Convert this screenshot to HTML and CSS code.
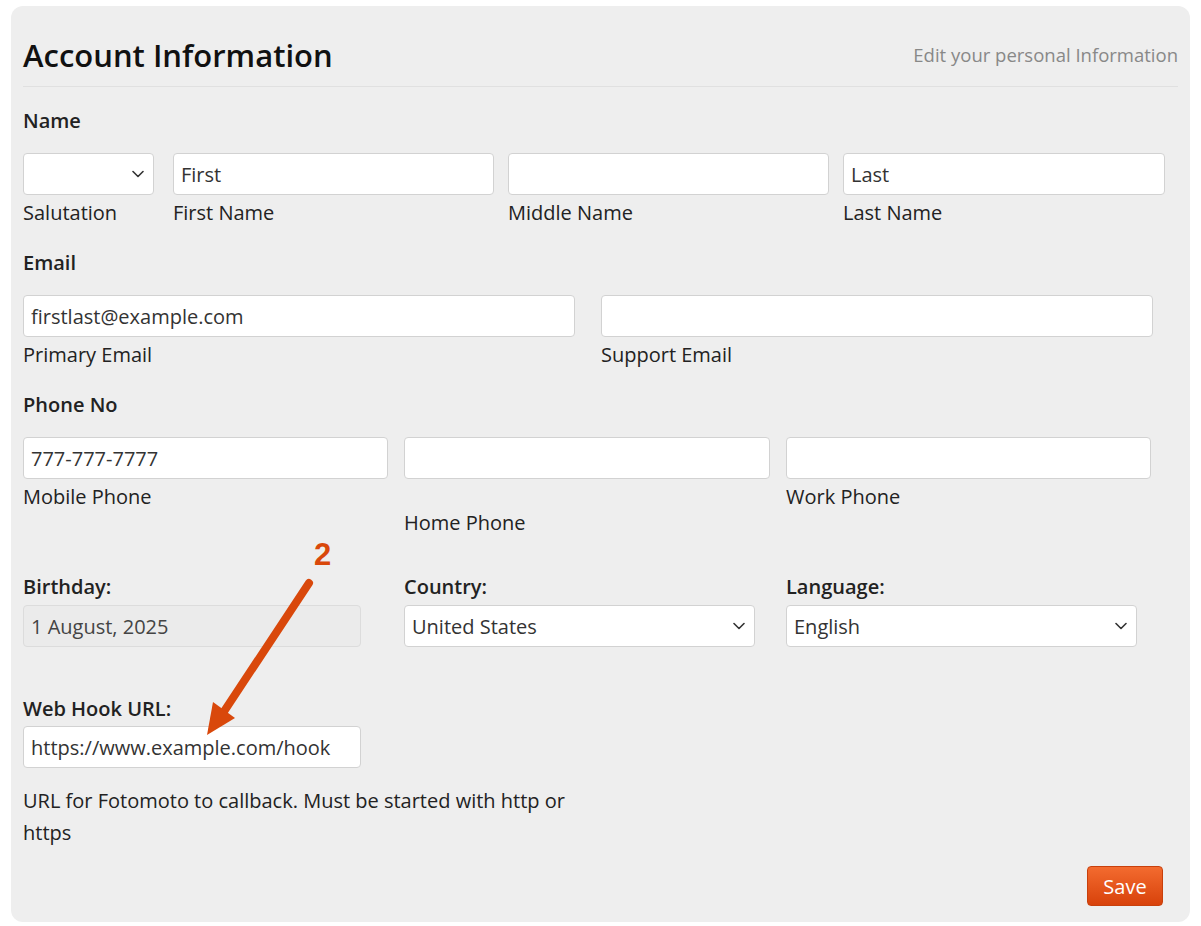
FILE: index.html
```html
<!DOCTYPE html>
<html lang="en">
<head>
<meta charset="UTF-8">
<meta name="viewport" content="width=device-width, initial-scale=1.0">
<title>Account Information</title>
<link rel="stylesheet" href="styles.css">
</head>
<body>

<div class="panel">
    <div class="panel-header">
        <h1>Account Information</h1>
        <span class="subtitle">Edit your personal Information</span>
    </div>

    <form id="accountForm">
        <div class="section">
            <div class="section-label">Name</div>
            <div class="row name-row">
                <div class="field salutation">
                    <div class="select-wrap">
                        <select id="salutation"><option value=""></option><option>Mr.</option><option>Ms.</option></select>
                        <svg class="chevron" viewBox="0 0 12 8" width="12" height="8"><path d="M1 1.5 6 6.5 11 1.5" fill="none" stroke="#333" stroke-width="1.6" stroke-linecap="round" stroke-linejoin="round"/></svg>
                    </div>
                    <div class="caption">Salutation</div>
                </div>
                <div class="field">
                    <input type="text" value="First">
                    <div class="caption">First Name</div>
                </div>
                <div class="field">
                    <input type="text" value="">
                    <div class="caption">Middle Name</div>
                </div>
                <div class="field">
                    <input type="text" value="Last">
                    <div class="caption">Last Name</div>
                </div>
            </div>
        </div>

        <div class="section">
            <div class="section-label">Email</div>
            <div class="row email-row">
                <div class="field">
                    <input type="text" value="firstlast@example.com">
                    <div class="caption">Primary Email</div>
                </div>
                <div class="field">
                    <input type="text" value="">
                    <div class="caption">Support Email</div>
                </div>
            </div>
        </div>

        <div class="section">
            <div class="section-label">Phone No</div>
            <div class="row phone-row">
                <div class="field">
                    <input type="text" value="777-777-7777">
                    <div class="caption">Mobile Phone</div>
                </div>
                <div class="field">
                    <input type="text" value="">
                    <div class="caption caption-low">Home Phone</div>
                </div>
                <div class="field">
                    <input type="text" value="">
                    <div class="caption">Work Phone</div>
                </div>
            </div>
        </div>

        <div class="row phone-row extra-row">
            <div class="field">
                <label class="field-label">Birthday:</label>
                <input type="text" class="short" value="1 August, 2025" disabled>
            </div>
            <div class="field">
                <label class="field-label">Country:</label>
                <div class="select-wrap wide">
                    <select><option>United States</option><option>Canada</option></select>
                    <svg class="chevron" viewBox="0 0 12 8" width="12" height="8"><path d="M1 1.5 6 6.5 11 1.5" fill="none" stroke="#333" stroke-width="1.6" stroke-linecap="round" stroke-linejoin="round"/></svg>
                </div>
            </div>
            <div class="field">
                <label class="field-label">Language:</label>
                <div class="select-wrap wide">
                    <select><option>English</option><option>French</option></select>
                    <svg class="chevron" viewBox="0 0 12 8" width="12" height="8"><path d="M1 1.5 6 6.5 11 1.5" fill="none" stroke="#333" stroke-width="1.6" stroke-linecap="round" stroke-linejoin="round"/></svg>
                </div>
            </div>
        </div>

        <div class="hook">
            <label class="field-label">Web Hook URL:</label>
            <input type="text" class="short" value="https://www.example.com/hook">
            <p class="help">URL for Fotomoto to callback. Must be started with http or https</p>
        </div>

        <div class="actions">
            <button type="button" class="btn-save">Save</button>
        </div>
    </form>

    <!-- annotation -->
    <div class="marker">2</div>
    <svg class="arrow" width="140" height="170" viewBox="0 0 140 170">
        <line x1="119" y1="28" x2="33" y2="158" stroke="#d9480b" stroke-width="8" stroke-linecap="round"/>
        <polygon points="17,180 23,147 45,163" fill="#d9480b"/>
    </svg>
</div>

</body>
</html>
```

FILE: styles.css
```css
body {
    margin: 0;
    padding: 0;
    background: #fff;
    font-family: "Open Sans", "Liberation Sans", sans-serif;
    font-size: 20px;
    color: #222;
}
.panel {
    position: relative;
    margin: 6px 11px;
    height: 916px;
    box-sizing: border-box;
    padding: 28px 12px 16px 12px;
    background-color: #eeeeee;
    border-radius: 12px;
}
.panel-header {
    display: flex;
    justify-content: space-between;
    align-items: center;
    padding-bottom: 10px;
    border-bottom: 1px solid #e0e0e0;
}
h1 {
    margin: 0;
    font-size: 31px;
    line-height: 42px;
    font-weight: 600;
    color: #111;
}
.subtitle {
    color: #888;
    font-size: 18.5px;
    margin-top: -2px;
}
form {
    margin-top: 21px;
}
.section {
    margin-bottom: 24px;
}
.section-label {
    font-weight: 600;
    line-height: 26px;
    margin-bottom: 19px;
}
.row {
    display: grid;
}
.name-row {
    grid-template-columns: 136px 321px 321px 322px;
    column-gap: 14px;
}
.salutation {
    margin-right: 5px;
}
.email-row {
    grid-template-columns: 552px 552px;
    column-gap: 26px;
}
.phone-row {
    grid-template-columns: 365px 366px 365px;
    column-gap: 16px;
}
input[type="text"], select {
    display: block;
    width: 100%;
    height: 42px;
    box-sizing: border-box;
    padding: 0 7px;
    border: 1px solid #d2d2d2;
    border-radius: 4px;
    background: #fff;
    font-family: inherit;
    font-size: 20px;
    color: #333;
    outline: none;
}
input[type="text"]:disabled {
    background: #ebebeb;
    border-color: #dcdcdc;
    color: #444;
}
select {
    appearance: none;
    -webkit-appearance: none;
}
.select-wrap {
    position: relative;
}
.select-wrap.wide {
    width: 351px;
}
.chevron {
    position: absolute;
    right: 10px;
    top: 17px;
    pointer-events: none;
}
.caption {
    margin-top: 5px;
    line-height: 26px;
    color: #222;
}
.caption-low {
    margin-top: 31px;
}
.extra-row {
    margin-top: 38px;
}
.field-label {
    display: block;
    font-weight: 600;
    line-height: 26px;
    margin-bottom: 5px;
}
input.short {
    width: 338px;
}
.hook {
    margin-top: 49px;
}
.hook .field-label {
    margin-bottom: 4px;
}
.help {
    margin: 17px 0 0 0;
    max-width: 565px;
    line-height: 32px;
    color: #222;
}
.actions {
    display: flex;
    justify-content: flex-end;
    margin-top: 17px;
    padding-right: 15px;
}
.btn-save {
    width: 76px;
    height: 40px;
    border: 1px solid #c8400c;
    border-radius: 4px;
    background: linear-gradient(#f36b2f, #d8420b);
    color: #fff;
    font-family: inherit;
    font-size: 20px;
    cursor: pointer;
}
.marker {
    position: absolute;
    left: 303px;
    top: 531px;
    font-family: "Liberation Sans", Arial, sans-serif;
    font-weight: bold;
    font-size: 31px;
    line-height: 36px;
    color: #d9480b;
}
.arrow {
    position: absolute;
    left: 179px;
    top: 549px;
    overflow: visible;
}
```
